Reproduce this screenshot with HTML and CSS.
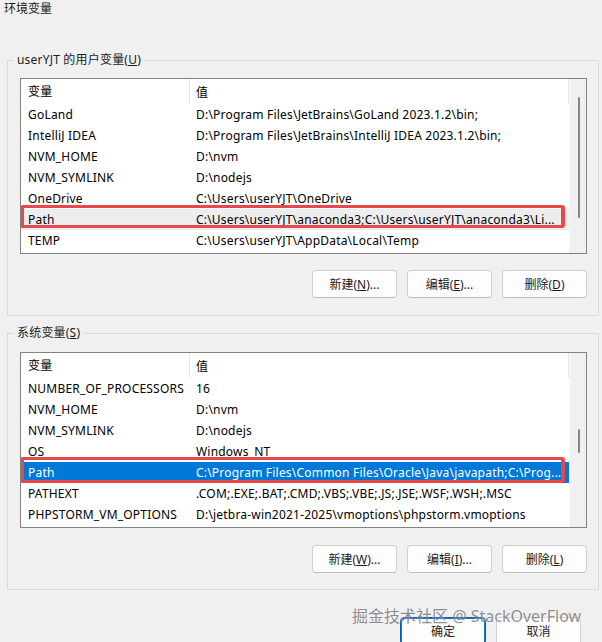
FILE: index.html
```html
<!DOCTYPE html>
<html lang="zh-CN">
<head>
<meta charset="utf-8">
<title>环境变量</title>
<link rel="stylesheet" href="styles.css">
</head>
<body>
<div class="window">
  <div class="title">环境变量</div>

  <section class="group group-user">
    <div class="group-label">userYJT 的用户变量(<u>U</u>)</div>
    <div class="list">
      <div class="list-main">
        <div class="list-head"><div class="cell name">变量</div><div class="cell val">值</div></div>
        <div class="row"><div class="cell name">GoLand</div><div class="cell val">D:\Program Files\JetBrains\GoLand 2023.1.2\bin;</div></div>
        <div class="row"><div class="cell name">IntelliJ IDEA</div><div class="cell val">D:\Program Files\JetBrains\IntelliJ IDEA 2023.1.2\bin;</div></div>
        <div class="row"><div class="cell name">NVM_HOME</div><div class="cell val">D:\nvm</div></div>
        <div class="row"><div class="cell name">NVM_SYMLINK</div><div class="cell val">D:\nodejs</div></div>
        <div class="row"><div class="cell name">OneDrive</div><div class="cell val">C:\Users\userYJT\OneDrive</div></div>
        <div class="row row-inactive"><div class="cell name">Path</div><div class="cell val">C:\Users\userYJT\anaconda3;C:\Users\userYJT\anaconda3\Li...</div><div class="mark mark-user"></div></div>
        <div class="row"><div class="cell name">TEMP</div><div class="cell val">C:\Users\userYJT\AppData\Local\Temp</div></div>
      </div>
      <div class="scrollbar"><div class="thumb thumb-user"></div></div>
    </div>
    <div class="btns">
      <button class="btn">新建(<u>N</u>)...</button>
      <button class="btn">编辑(<u>E</u>)...</button>
      <button class="btn">删除(<u>D</u>)</button>
    </div>
  </section>

  <section class="group group-sys">
    <div class="group-label">系统变量(<u>S</u>)</div>
    <div class="list">
      <div class="list-main">
        <div class="list-head"><div class="cell name">变量</div><div class="cell val">值</div></div>
        <div class="row"><div class="cell name">NUMBER_OF_PROCESSORS</div><div class="cell val">16</div></div>
        <div class="row"><div class="cell name">NVM_HOME</div><div class="cell val">D:\nvm</div></div>
        <div class="row"><div class="cell name">NVM_SYMLINK</div><div class="cell val">D:\nodejs</div></div>
        <div class="row"><div class="cell name">OS</div><div class="cell val">Windows_NT</div></div>
        <div class="row row-selected"><div class="cell name">Path</div><div class="cell val">C:\Program Files\Common Files\Oracle\Java\javapath;C:\Prog...</div><div class="mark mark-sys"></div></div>
        <div class="row"><div class="cell name">PATHEXT</div><div class="cell val">.COM;.EXE;.BAT;.CMD;.VBS;.VBE;.JS;.JSE;.WSF;.WSH;.MSC</div></div>
        <div class="row"><div class="cell name">PHPSTORM_VM_OPTIONS</div><div class="cell val">D:\jetbra-win2021-2025\vmoptions\phpstorm.vmoptions</div></div>
      </div>
      <div class="scrollbar"><div class="thumb thumb-sys"></div></div>
    </div>
    <div class="btns">
      <button class="btn">新建(<u>W</u>)...</button>
      <button class="btn">编辑(<u>I</u>)...</button>
      <button class="btn">删除(<u>L</u>)</button>
    </div>
  </section>

  <div class="footer">
    <button class="btn btn-default">确定</button>
    <button class="btn">取消</button>
  </div>

  <div class="watermark">掘金技术社区 @ StackOverFlow</div>
</div>
</body>
</html>
```

FILE: styles.css
```css
* { box-sizing: border-box; }

html, body {
  margin: 0;
  padding: 0;
  background: #f0f0f0;
}

body {
  font-family: "Noto Sans", "Noto Sans CJK SC", sans-serif;
  font-size: 12px;
  color: #000;
}

.window {
  position: relative;
  width: 602px;
  height: 642px;
  overflow: hidden;
  background: #f0f0f0;
}

.title {
  height: 18px;
  line-height: 18px;
  padding-left: 4px;
  color: #1b1b1b;
}

.group {
  position: relative;
  margin-left: 7px;
  width: 592px;
  border: 1px solid #dadada;
  padding: 17px 11px 17px 12px;
}

.group-user { margin-top: 42px; }
.group-sys { margin-top: 17px; padding-top: 18px; padding-bottom: 16px; }

.group-label {
  position: absolute;
  top: -10px;
  left: 6px;
  padding: 0 3px;
  line-height: 18px;
  background: #f0f0f0;
  color: #1b1b1b;
  letter-spacing: 0.2px;
}

.list {
  display: flex;
  width: 567px;
  height: 176px;
  border: 1px solid #828282;
  background: #fff;
}

.list-main {
  flex: 1;
  min-width: 0;
  overflow: hidden;
}

.list-head {
  display: flex;
  height: 25px;
  align-items: center;
  border-right: 1px solid #e6e6e6;
}

.list-head .name {
  border-right: 1px solid #e5e5e5;
  height: 25px;
  line-height: 25px;
}

.row {
  position: relative;
  display: flex;
  height: 21px;
  align-items: center;
}

.cell {
  white-space: nowrap;
  overflow: hidden;
  letter-spacing: 0.2px;
}

.name {
  width: 169px;
  flex: none;
  padding-left: 7px;
}

.val {
  flex: 1;
  padding-left: 6px;
}

.row-inactive { background: #ededed; }

.row-selected {
  background: #0078d7;
  color: #fff;
}

.mark {
  position: absolute;
  left: -1px;
  width: 545px;
  border: 3px solid #e8474c;
  border-left-width: 4px;
  border-right-width: 4px;
  border-radius: 3px;
  pointer-events: none;
}

.mark-user { top: -4px; height: 23px; }
.mark-sys { top: -5px; height: 26px; }

.scrollbar {
  position: relative;
  width: 17px;
  flex: none;
  background: #f0f0f0;
  border-left: 1px solid #f7f7f7;
}

.thumb {
  position: absolute;
  left: 8px;
  width: 2px;
  border-radius: 1px;
  background: #868686;
}

.thumb-user { top: 18px; height: 121px; }
.thumb-sys { top: 76px; height: 24px; }

.btns {
  display: flex;
  justify-content: flex-end;
  gap: 10px;
  margin-top: 16px;
}

.group-sys .btns { margin-top: 17px; }

.btn {
  width: 85px;
  height: 28px;
  padding: 0;
  font: inherit;
  color: #1b1b1b;
  background: #fdfdfd;
  border: 1px solid #d0d0d0;
  border-bottom-color: #bdbdbd;
  border-radius: 4px;
}

.btn u { text-decoration: underline; }

.footer {
  display: flex;
  justify-content: flex-end;
  gap: 10px;
  margin-top: 27px;
  padding-right: 21px;
}

.btn-default {
  width: 86px;
  border: 1px solid #005fb8;
  box-shadow: inset 0 0 0 1px #1a73c4;
}

.watermark {
  position: absolute;
  left: 352px;
  top: 604px;
  font-size: 16px;
  line-height: 24px;
  color: rgba(105, 105, 105, 0.75);
  white-space: nowrap;
  text-shadow: 0 0 2px rgba(255, 255, 255, 0.6);
}
```
